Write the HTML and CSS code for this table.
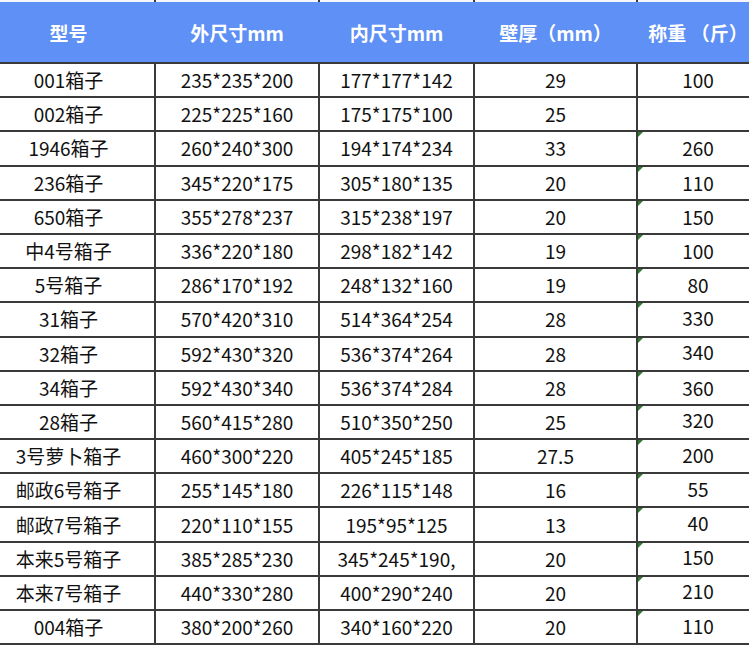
FILE: index.html
```html
<!DOCTYPE html>
<html lang="zh-CN">
<head>
<meta charset="utf-8">
<title>箱子尺寸表</title>
<link rel="stylesheet" href="styles.css">
</head>
<body>
<table class="sheet">
  <colgroup>
    <col class="c1"><col class="c2"><col class="c3"><col class="c4"><col class="c5">
  </colgroup>
  <thead>
    <tr class="cut"><td></td><td></td><td></td><td></td><td></td></tr>
    <tr class="head">
      <th>型号</th><th>外尺寸mm</th><th>内尺寸mm</th><th>壁厚（mm）</th><th>称重 （斤）</th>
    </tr>
  </thead>
  <tbody>
    <tr><td>001箱子</td><td>235*235*200</td><td>177*177*142</td><td>29</td><td>100</td></tr>
    <tr><td>002箱子</td><td>225*225*160</td><td>175*175*100</td><td>25</td><td></td></tr>
    <tr><td>1946箱子</td><td>260*240*300</td><td>194*174*234</td><td>33</td><td class="tri">260</td></tr>
    <tr><td>236箱子</td><td>345*220*175</td><td>305*180*135</td><td>20</td><td class="tri">110</td></tr>
    <tr><td>650箱子</td><td>355*278*237</td><td>315*238*197</td><td>20</td><td class="tri">150</td></tr>
    <tr><td>中4号箱子</td><td>336*220*180</td><td>298*182*142</td><td>19</td><td class="tri">100</td></tr>
    <tr><td>5号箱子</td><td>286*170*192</td><td>248*132*160</td><td>19</td><td class="tri">80</td></tr>
    <tr><td>31箱子</td><td>570*420*310</td><td>514*364*254</td><td>28</td><td class="tri up">330</td></tr>
    <tr><td>32箱子</td><td>592*430*320</td><td>536*374*264</td><td>28</td><td class="tri up">340</td></tr>
    <tr><td>34箱子</td><td>592*430*340</td><td>536*374*284</td><td>28</td><td class="tri">360</td></tr>
    <tr><td>28箱子</td><td>560*415*280</td><td>510*350*250</td><td>25</td><td class="tri up">320</td></tr>
    <tr><td>3号萝卜箱子</td><td>460*300*220</td><td>405*245*185</td><td>27.5</td><td class="tri up">200</td></tr>
    <tr><td>邮政6号箱子</td><td>255*145*180</td><td>226*115*148</td><td>16</td><td class="tri up">55</td></tr>
    <tr><td>邮政7号箱子</td><td>220*110*155</td><td>195*95*125</td><td>13</td><td class="tri up">40</td></tr>
    <tr><td>本来5号箱子</td><td>385*285*230</td><td>345*245*190,</td><td>20</td><td class="tri up">150</td></tr>
    <tr><td>本来7号箱子</td><td>440*330*280</td><td>400*290*240</td><td>20</td><td class="tri up">210</td></tr>
    <tr><td>004箱子</td><td>380*200*260</td><td>340*160*220</td><td>20</td><td class="tri up">110</td></tr>
  </tbody>
</table>
</body>
</html>
```
FILE: styles.css
```css
html, body {
  margin: 0;
  padding: 0;
  background: #ffffff;
  overflow: hidden;
}

.sheet {
  border-collapse: collapse;
  table-layout: fixed;
  width: 777px;
  margin-left: -19px;
  font-family: "Noto Sans CJK SC", "Microsoft YaHei", sans-serif;
}

.c1 { width: 173px; }
.c2 { width: 164px; }
.c3 { width: 155px; }
.c4 { width: 163px; }
.c5 { width: 122px; }

.cut td {
  height: 2px;
  padding: 0;
  border-top: none;
  border-bottom: none;
  background: #f4f6fb;
}

.head th {
  height: 60px;
  padding: 0;
  background: #5e90f5;
  color: #ffffff;
  font-size: 19px;
  font-weight: 700;
  text-align: center;
  vertical-align: middle;
  border: none;
}

td {
  border: 2px solid #3a3a3a;
  height: 32.2px;
  padding: 0;
  text-align: center;
  vertical-align: middle;
  font-size: 19px;
  color: #111111;
  line-height: 22px;
  white-space: nowrap;
  overflow: hidden;
}

.tri {
  position: relative;
}

.tri::before {
  content: "";
  position: absolute;
  top: 0;
  left: 0;
  border-top: 5px solid #2f7a2f;
  border-right: 5px solid transparent;
}

.up {
  height: 29.2px;
  padding-bottom: 3px;
}
```
